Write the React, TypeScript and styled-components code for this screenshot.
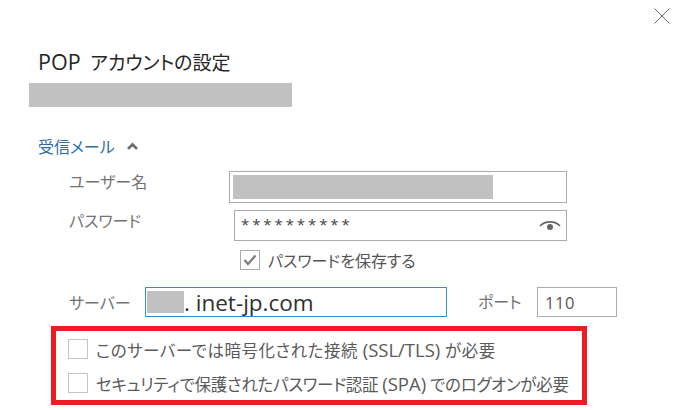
import React from "react";
import styled, { createGlobalStyle } from "styled-components";

const GlobalStyle = createGlobalStyle`
  html, body {
    margin: 0;
    padding: 0;
    background: #ffffff;
  }

  * {
    box-sizing: border-box;
  }
`;

const FONT = `"Open Sans", "Noto Sans CJK JP", sans-serif`;

const Page = styled.div`
  width: 684px;
  height: 410px;
  overflow: hidden;
  background: #ffffff;
  font-family: ${FONT};
  font-weight: 300;
  font-feature-settings: "palt";
  display: flex;
  flex-direction: column;
`;

const CloseRow = styled.div`
  height: 44px;
  padding: 8px 14px 0 0;
  display: flex;
  justify-content: flex-end;
  align-items: flex-start;

  svg {
    display: block;
  }
`;

const Title = styled.h1`
  margin: 0 0 0 38px;
  height: 39px;
  line-height: 35px;
  font-size: 19px;
  font-weight: 400;
  color: #262626;
  white-space: nowrap;
`;

const TitleLatin = styled.span`
  font-size: 21.5px;
  margin-right: 4px;
`;

const Redacted = styled.div<{ $width: number; $height: number }>`
  width: ${(p) => p.$width}px;
  height: ${(p) => p.$height}px;
  flex: none;
  background: #c1c1c1;
`;

const AccountBar = styled(Redacted)`
  margin-left: 29px;
`;

const SectionHeader = styled.div`
  margin: 27px 0 0 38px;
  height: 24px;
  display: flex;
  align-items: center;
  gap: 12px;
  font-size: 16px;
  font-weight: 400;
  color: #2f6ca5;

  svg {
    display: block;
  }
`;

const Row = styled.div<{ $top: number; $height: number }>`
  margin-top: ${(p) => p.$top}px;
  height: ${(p) => p.$height}px;
  display: flex;
  align-items: center;
`;

const FieldLabel = styled.span<{ $width: number; $left?: number; $shift?: number }>`
  width: ${(p) => p.$width}px;
  margin-left: ${(p) => p.$left ?? 0}px;
  margin-top: ${(p) => p.$shift ?? 0}px;
  flex: none;
  font-size: 16px;
  font-weight: 400;
  color: #737373;
  white-space: nowrap;
`;

const Field = styled.div<{ $width: number; $active?: boolean; $left?: number }>`
  width: ${(p) => p.$width}px;
  height: 100%;
  margin-left: ${(p) => p.$left ?? 0}px;
  flex: none;
  display: flex;
  align-items: center;
  border: 1px solid ${(p) => (p.$active ? "#3b8ac9" : "#ababab")};
  background: #ffffff;
`;

const UserField = styled(Field)`
  padding-left: 3px;
`;

const Stars = styled.span`
  flex: 1;
  padding: 0 0 3px 6px;
  font-size: 15px;
  letter-spacing: 2.9px;
  font-weight: 400;
  color: #444444;
`;

const EyeIcon = styled.svg`
  margin-right: 5px;
  display: block;
`;

const ServerField = styled(Field)`
  padding-left: 1px;
`;

const ServerText = styled.span`
  font-size: 22.5px;
  font-weight: 400;
  color: #303030;
  white-space: nowrap;
`;

const PortValue = styled.span`
  padding-left: 7px;
  font-size: 16.5px;
  font-weight: 400;
  letter-spacing: 0.6px;
  color: #555555;
`;

const CheckRow = styled.label<{ $left: number; $top?: number; $size?: number; $tracking?: number }>`
  display: flex;
  align-items: center;
  gap: 8px;
  margin-left: ${(p) => p.$left}px;
  margin-top: ${(p) => p.$top ?? 0}px;
  height: 20px;
  font-size: ${(p) => p.$size ?? 16}px;
  letter-spacing: ${(p) => p.$tracking ?? 0}px;
  font-weight: 400;
  color: #555555;
  white-space: nowrap;
`;

const Box = styled.span<{ $light?: boolean }>`
  width: 20px;
  height: 20px;
  flex: none;
  display: flex;
  align-items: center;
  justify-content: center;
  border: 1px solid ${(p) => (p.$light ? "#c4c4c4" : "#ababab")};
  background: #ffffff;
`;

const RedFrame = styled.div`
  margin: 9px 0 0 51px;
  width: 536px;
  height: 79px;
  border: 5px solid #ed1c24;
  padding: 8px 0 0 12px;
  display: flex;
  flex-direction: column;
`;

const FrameCheck = styled(CheckRow)`
  color: #5a5a5a;
`;

const Latin = styled.span`
  font-size: 18.5px;
  letter-spacing: 0;
`;

const App: React.FC = () => {
  return (
    <Page>
      <GlobalStyle />

      <CloseRow>
        <svg width="16" height="16" viewBox="0 0 16 16" fill="none">
          <path d="M0.5 0.5 L15.5 15.5 M15.5 0.5 L0.5 15.5" stroke="#6a6a6a" strokeWidth="1" />
        </svg>
      </CloseRow>

      <Title><TitleLatin>POP </TitleLatin>アカウントの設定</Title>
      <AccountBar $width={263} $height={24} />

      <SectionHeader>
        受信メール
        <svg width="11" height="8" viewBox="0 0 11 8">
          <path d="M0 6 L5.5 0.5 L11 6 L9 7.8 L5.5 4.5 L2 7.8 Z" fill="#6c6c6c" />
        </svg>
      </SectionHeader>

      <Row $top={13} $height={32}>
        <FieldLabel $left={69} $width={160} $shift={-12}>ユーザー名</FieldLabel>
        <UserField $width={338}>
          <Redacted $width={260} $height={24} />
        </UserField>
      </Row>

      <Row $top={7} $height={31}>
        <FieldLabel $left={69} $width={165} $shift={-11}>パスワード</FieldLabel>
        <Field $width={333}>
          <Stars>**********</Stars>
          <EyeIcon width="22" height="12" viewBox="0 0 22 12" fill="none">
            <path d="M1 6 C6 0.5 16 0.5 21 6" stroke="#666666" strokeWidth="1.6" />
            <circle cx="11" cy="7" r="3" fill="#666666" />
          </EyeIcon>
        </Field>
      </Row>

      <CheckRow $left={240} $top={9}>
        <Box>
          <svg width="14" height="12" viewBox="0 0 14 12" fill="none">
            <path d="M1.5 6 L5 10 L12.5 1.5" stroke="#808080" strokeWidth="2.4" />
          </svg>
        </Box>
        パスワードを保存する
      </CheckRow>

      <Row $top={17} $height={30}>
        <FieldLabel $left={69} $width={76} $shift={-1}>サーバー</FieldLabel>
        <ServerField $width={302} $active>
          <Redacted $width={37} $height={22} />
          <ServerText>. inet-jp.com</ServerText>
        </ServerField>
        <FieldLabel $left={31} $width={59} $shift={-3}>ポート</FieldLabel>
        <Field $width={80}>
          <PortValue>110</PortValue>
        </Field>
      </Row>

      <RedFrame>
        <FrameCheck $left={0} $size={16.5} $tracking={0.5}>
          <Box $light />
          <span>このサーバーでは暗号化された接続 <Latin>(SSL/TLS)</Latin> が必要</span>
        </FrameCheck>
        <FrameCheck $left={0} $top={14} $size={16.5} $tracking={-0.3}>
          <Box $light />
          <span>セキュリティで保護されたパスワード認証 <Latin>(SPA)</Latin> でのログオンが必要</span>
        </FrameCheck>
      </RedFrame>
    </Page>
  );
};

export default App;
